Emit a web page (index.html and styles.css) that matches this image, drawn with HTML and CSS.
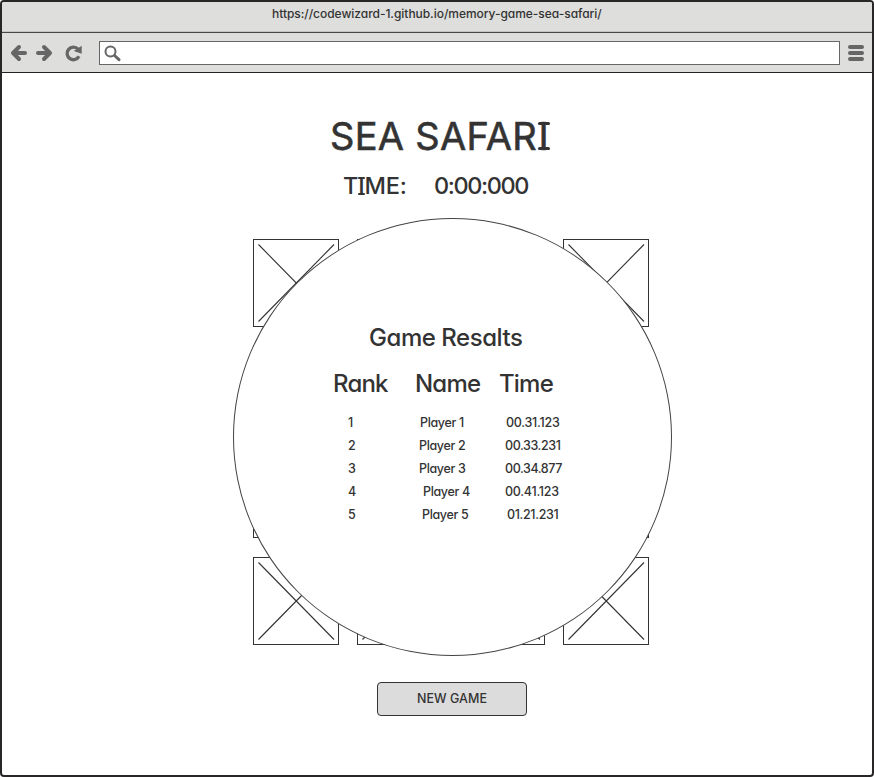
FILE: index.html
```html
<!DOCTYPE html>
<html lang="en">
<head>
<meta charset="utf-8">
<title>Sea Safari</title>
<link rel="stylesheet" href="styles.css">
</head>
<body>
<div class="browser">
  <header class="titlebar"><span class="url">https://codewizard-1.github.io/memory-game-sea-safari/</span></header>
  <nav class="toolbar">
    <svg class="nav-icons" width="97" height="39" viewBox="0 0 97 39" fill="none" stroke="#666" stroke-width="4" stroke-linecap="round" stroke-linejoin="round">
      <path d="M17 14L11 20L17 26M11.5 20H23"/>
      <path d="M42 14L48 20L42 26M47.5 20H36"/>
      <path d="M77 23.3A6.3 6.3 0 1 1 76 16.1" stroke-width="3.3" stroke-linecap="butt"/>
      <path d="M79.7 12.7V20.7L71.7 18Z" fill="#666" stroke="none"/>
    </svg>
    <div class="address">
      <svg width="22" height="22" viewBox="0 0 22 22" fill="none" stroke="#666" stroke-linecap="round">
        <circle cx="9.5" cy="8.5" r="5" stroke-width="2"/>
        <path d="M13.5 12.5L18 16.7" stroke-width="3"/>
      </svg>
    </div>
    <div class="menu"><i></i><i></i><i></i></div>
  </nav>
  <main class="page">
    <h1 class="title">SEA SAFAR<span class="slab">I</span></h1>
    <div class="timer"><span class="timer-label">T<span class="slab">I</span>ME:</span><span class="timer-value">0:00:000</span></div>
    <section class="board">
      <svg class="card"><use href="#x"/></svg><svg class="card"><use href="#x"/></svg><svg class="card"><use href="#x"/></svg><svg class="card"><use href="#x"/></svg>
      <svg class="card"><use href="#x"/></svg><svg class="card"><use href="#x"/></svg><svg class="card"><use href="#x"/></svg><svg class="card"><use href="#x"/></svg>
      <svg class="card"><use href="#x"/></svg><svg class="card"><use href="#x"/></svg><svg class="card"><use href="#x"/></svg><svg class="card"><use href="#x"/></svg>
      <svg class="card"><defs><path id="x" d="M4.5 4.5L80 81.5M80 4.5L4.5 81.5"/></defs><use href="#x"/></svg><svg class="card"><use href="#x"/></svg><svg class="card"><use href="#x"/></svg><svg class="card"><use href="#x"/></svg>
      <div class="results">
        <h2 class="results-title">Game Resalts</h2>
        <div class="row head"><span>Rank</span><span>Name</span><span>Time</span></div>
        <div class="row r1"><span class="rank">1</span><span class="name">Player 1</span><span class="time">00.31.123</span></div>
        <div class="row r2"><span class="rank">2</span><span class="name">Player 2</span><span class="time">00.33.231</span></div>
        <div class="row r3"><span class="rank">3</span><span class="name">Player 3</span><span class="time">00.34.877</span></div>
        <div class="row r4"><span class="rank">4</span><span class="name">Player 4</span><span class="time">00.41.123</span></div>
        <div class="row r5"><span class="rank">5</span><span class="name">Player 5</span><span class="time">01.21.231</span></div>
      </div>
    </section>
    <button class="new-game"><span>NEW GAME</span></button>
  </main>
</div>
</body>
</html>
```
FILE: styles.css
```css
* { box-sizing: border-box; }
body { margin: 0; background: #fff; color: #333; font-family: Inter, Lato, sans-serif; font-feature-settings: "cv11"; font-size: 13px; font-weight: 500; }
h1, h2 { margin: 0; font-weight: 450; white-space: nowrap; }
.browser { width: 874px; height: 777px; border: 2px solid #292627; border-radius: 4px; overflow: hidden; }
.titlebar { height: 31px; padding: 4px 0 0 270px; background: #dededc; border-bottom: 1px solid #484848; box-shadow: inset 0 -1px #c4c4c2; line-height: 16px; font-size: 12px; white-space: nowrap; }
.url { letter-spacing: -.04px; }
.toolbar { height: 40px; display: flex; align-items: flex-start; background: #dededc; border-bottom: 1px solid #222; }
.nav-icons { flex: none; }
.address { width: 741px; height: 24px; margin-top: 8px; background: #fff; border: 1px solid #666; }
.address svg { display: block; margin: 1px 0 0 1px; }
.menu { display: flex; flex-direction: column; gap: 2px; margin: 12px 0 0 8px; }
.menu i { width: 16px; height: 4px; border-radius: 2px; background: #666; }
.page { display: flex; flex-direction: column; height: 702px; padding-top: 38px; }
.title { margin-left: 328px; height: 50px; line-height: 50px; font-size: 38px; font-weight: 400; -webkit-text-stroke: .6px #333; letter-spacing: .3px; }
.slab { position: relative; }
.slab::before, .slab::after { content: ""; position: absolute; left: -.02em; right: -.02em; height: .085em; border-radius: .05em; background: #333; }
.slab::before { top: .24em; }
.slab::after { bottom: .23em; }
.title .slab { margin-left: 1.5px; }
.timer { display: flex; margin-top: 10px; height: 30px; line-height: 30px; font-size: 23.5px; font-weight: 450; padding-left: 341px; white-space: nowrap; }
.timer-label { width: 91px; letter-spacing: -.15px; }
.timer-value { letter-spacing: -1.4px; }
.board { position: relative; display: grid; grid-template-columns: 104px 102px 104px 86px; grid-template-rows: 106px 105px 107px 88px; margin: 38px 0 0 251px; width: 396px; }
.card { width: 86px; height: 88px; border: 1px solid #333; fill: none; stroke: #333; stroke-width: 1.1; }
.results { position: absolute; left: -20px; top: -21px; width: 439px; height: 438px; border: 1px solid #444; border-radius: 50%; background: #fff; padding-top: 103px; white-space: nowrap; }
.results-title { margin-left: 135px; height: 32px; line-height: 32px; font-size: 24px; letter-spacing: -.45px; }
.row { display: grid; grid-template-columns: 82px 84px 80px; height: 23px; line-height: 23px; margin-left: 100px; font-size: 12.5px; letter-spacing: -.35px; }
.head { height: 36px; margin: 12px 0 9px 99px; line-height: 36px; font-size: 24px; font-weight: 450; letter-spacing: -.8px; }
.rank { padding-left: 14px; }
.name { padding-left: 4px; }
.time { padding-left: 6px; }
.r1 .time, .r4 .time { letter-spacing: -.25px; }
.r2 .name, .r3 .name { padding-left: 3px; }
.r2 .time, .r3 .time, .r4 .time { padding-left: 5px; }
.r2 .time, .r3 .time { letter-spacing: -.42px; }
.r4 .name { padding-left: 7px; }
.r5 .name { padding-left: 6px; }
.r5 .time { padding-left: 7px; }
.new-game { display: flex; align-items: center; justify-content: center; width: 150px; height: 34px; margin: 37px 0 0 375px; padding: 0 0 1px; border: 1px solid #333; border-radius: 4px; background: #dcdcdc; color: #333; font: inherit; font-size: 12.5px; font-weight: 450; letter-spacing: .05px; }
```
